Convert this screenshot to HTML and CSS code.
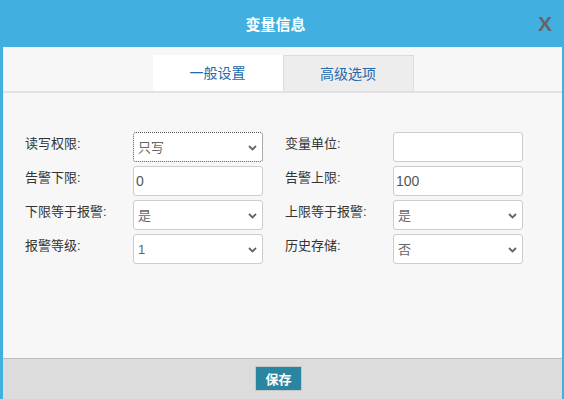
FILE: index.html
```html
<!DOCTYPE html>
<html lang="zh-CN">
<head>
  <meta charset="UTF-8" />
  <meta name="viewport" content="width=device-width, initial-scale=1.0" />
  <title>变量信息</title>
  <link rel="stylesheet" href="styles.css">
</head>
<body>
  <div class="dialog">
    <div class="dlg-head">
      <span class="dlg-title">变量信息</span>
      <span class="dlg-close">X</span>
    </div>

    <div class="dlg-body">
      <div class="tabs">
        <span class="tab active">一般设置</span>
        <span class="tab">高级选项</span>
      </div>

      <div class="form-grid">
        <label class="field-label">读写权限:</label>
        <div class="select-wrap">
          <select class="field focus"><option>只写</option></select>
          <svg class="chev" width="9" height="6" viewBox="0 0 9 6"><polyline points="1,1 4.5,4.5 8,1" fill="none" stroke="#666" stroke-width="1.8"/></svg>
        </div>
        <label class="field-label">变量单位:</label>
        <input class="field text" type="text" value="">

        <label class="field-label">告警下限:</label>
        <input class="field text" type="text" value="0">
        <label class="field-label">告警上限:</label>
        <input class="field text" type="text" value="100">

        <label class="field-label">下限等于报警:</label>
        <div class="select-wrap">
          <select class="field"><option>是</option></select>
          <svg class="chev" width="9" height="6" viewBox="0 0 9 6"><polyline points="1,1 4.5,4.5 8,1" fill="none" stroke="#666" stroke-width="1.8"/></svg>
        </div>
        <label class="field-label">上限等于报警:</label>
        <div class="select-wrap">
          <select class="field"><option>是</option></select>
          <svg class="chev" width="9" height="6" viewBox="0 0 9 6"><polyline points="1,1 4.5,4.5 8,1" fill="none" stroke="#666" stroke-width="1.8"/></svg>
        </div>

        <label class="field-label">报警等级:</label>
        <div class="select-wrap">
          <select class="field"><option>1</option></select>
          <svg class="chev" width="9" height="6" viewBox="0 0 9 6"><polyline points="1,1 4.5,4.5 8,1" fill="none" stroke="#666" stroke-width="1.8"/></svg>
        </div>
        <label class="field-label">历史存储:</label>
        <div class="select-wrap">
          <select class="field"><option>否</option></select>
          <svg class="chev" width="9" height="6" viewBox="0 0 9 6"><polyline points="1,1 4.5,4.5 8,1" fill="none" stroke="#666" stroke-width="1.8"/></svg>
        </div>
      </div>
    </div>

    <div class="dlg-foot">
      <button class="btn-save">保存</button>
    </div>
  </div>
</body>
</html>
```

FILE: styles.css
```css
* { box-sizing: border-box; margin: 0; padding: 0; }
body {
  background: #fff;
  font-family: "Liberation Sans", "Noto Sans CJK SC", sans-serif;
  color: #333;
}
.dialog {
  width: 564px;
  height: 399px;
  display: flex;
  flex-direction: column;
  border-left: 3px solid #42afe1;
  border-right: 2px solid #42afe1;
}
.dlg-head {
  position: relative;
  height: 47px;
  background: #42afe1;
  display: flex;
  align-items: center;
  justify-content: center;
  padding-right: 14px;
}
.dlg-title {
  color: #fff;
  font-size: 15px;
  font-weight: bold;
}
.dlg-close {
  position: absolute;
  right: 10px;
  top: 12px;
  font-size: 21px;
  font-weight: bold;
  color: #666;
  line-height: 24px;
}
.dlg-body {
  flex: 1;
  background: #f7f7f7;
}
.tabs {
  display: flex;
  justify-content: center;
  padding-top: 8px;
  padding-left: 1px;
  border-bottom: 2px solid #e2e2e2;
}
.tab {
  width: 131px;
  height: 36px;
  line-height: 36px;
  text-align: center;
  font-size: 14px;
  color: #2369ad;
  background: #ededed;
  border: 1px solid #dcdcdc;
  border-bottom: none;
}
.tab.active {
  width: 130px;
  background: #fff;
  border: none;
}
.form-grid {
  display: grid;
  grid-template-columns: 108px 152px 108px 130px;
  grid-auto-rows: 30px;
  row-gap: 4px;
  padding: 39px 0 0 22px;
}
.field-label {
  font-size: 13px;
  line-height: 20px;
  padding-top: 2px;
  color: #333;
}
.select-wrap {
  position: relative;
  width: 130px;
}
.field {
  width: 130px;
  height: 30px;
  border: 1px solid #ccc;
  border-radius: 3px;
  background: #fff;
  color: #555;
  font-family: "Liberation Sans", "Noto Sans CJK SC", sans-serif;
  font-size: 14px;
  outline: none;
}
select.field {
  appearance: none;
  -webkit-appearance: none;
  padding-left: 4px;
  font-size: 13px;
  color: #666;
}
.field.focus {
  border: 1px dotted #555;
}
.field.text {
  padding-left: 2px;
}
.chev {
  position: absolute;
  right: 6px;
  top: 13px;
  pointer-events: none;
}
.dlg-foot {
  height: 41px;
  background: #dcdcdc;
  border-top: 1px solid #bdbdbd;
  display: flex;
  justify-content: center;
  padding-top: 7px;
  padding-right: 8px;
}
.btn-save {
  width: 47px;
  height: 25px;
  background: #2a85a1;
  border: 1px solid #c6c6c6;
  color: #fff;
  font-family: "Liberation Sans", "Noto Sans CJK SC", sans-serif;
  font-size: 13px;
  font-weight: bold;
}
```
